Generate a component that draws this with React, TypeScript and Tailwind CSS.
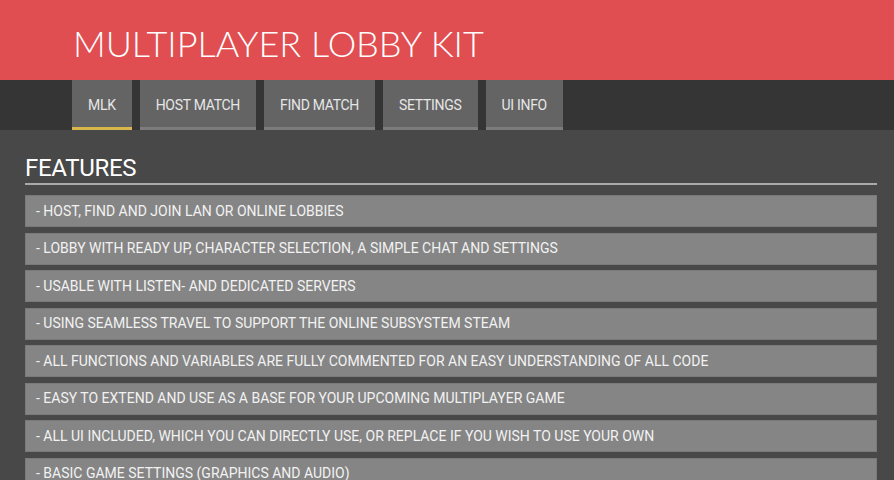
const tabs = [
  { label: "MLK", active: true },
  { label: "HOST MATCH", active: false },
  { label: "FIND MATCH", active: false },
  { label: "SETTINGS", active: false },
  { label: "UI INFO", active: false },
];

const features = [
  "- HOST, FIND AND JOIN LAN OR ONLINE LOBBIES",
  "- LOBBY WITH READY UP, CHARACTER SELECTION, A SIMPLE CHAT AND SETTINGS",
  "- USABLE WITH LISTEN- AND DEDICATED SERVERS",
  "- USING SEAMLESS TRAVEL TO SUPPORT THE ONLINE SUBSYSTEM STEAM",
  "- ALL FUNCTIONS AND VARIABLES ARE FULLY COMMENTED FOR AN EASY UNDERSTANDING OF ALL CODE",
  "- EASY TO EXTEND AND USE AS A BASE FOR YOUR UPCOMING MULTIPLAYER GAME",
  "- ALL UI INCLUDED, WHICH YOU CAN DIRECTLY USE, OR REPLACE IF YOU WISH TO USE YOUR OWN",
  "- BASIC GAME SETTINGS (GRAPHICS AND AUDIO)",
];

export default function App() {
  return (
    <div className="w-[894px] h-[480px] overflow-hidden bg-[#484848] font-['Roboto',sans-serif]">
      <header className="h-[80px] bg-[#e04e51] flex items-center pl-[73px]">
        <h1 className="font-['Lato',sans-serif] font-light text-[36px] text-white leading-none pt-[6px]">
          MULTIPLAYER LOBBY KIT
        </h1>
      </header>

      <nav className="h-[50px] bg-[#353535] flex gap-2 pl-[72px]">
        {tabs.map((t) => (
          <div
            key={t.label}
            className={`h-[50px] px-4 pt-[4px] flex items-center bg-[#646464] border-b-[3px] text-[14px] tracking-[-0.3px] text-[#e6e6e6] ${
              t.active ? "border-[#d8b64c]" : "border-[#7c7c7c]"
            }`}
          >
            {t.label}
          </div>
        ))}
      </nav>

      <main className="pl-[25px] pr-[17px] pt-[26px]">
        <h2 className="text-[24px] text-white leading-none pb-[3px] border-b-2 border-[#a9a9a9] tracking-[-0.3px]">
          FEATURES
        </h2>
        <ul className="mt-[10px] flex flex-col gap-[5.5px]">
          {features.map((f) => (
            <li
              key={f}
              className="h-[32px] flex items-center pl-[10px] bg-[#858585] border border-[#7a7a7a] text-[14px] text-[#f2f2f2]"
            >
              {f}
            </li>
          ))}
        </ul>
      </main>
    </div>
  );
}
